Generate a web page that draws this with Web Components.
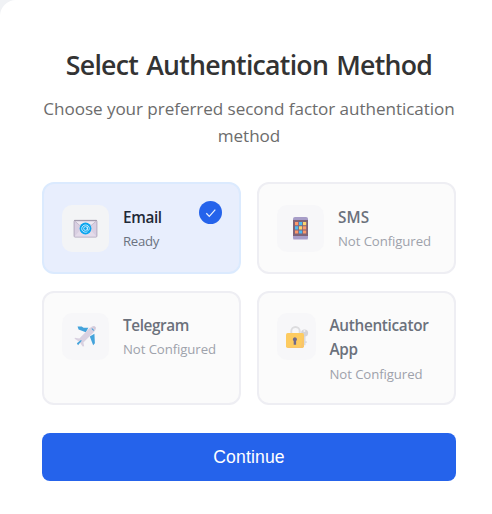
<!DOCTYPE html>
<html lang="en"><head><meta charset="utf-8"><title>Select Authentication Method</title>
<style>
html,body{margin:0;height:100%;overflow:hidden}
body{background:#f0f2f5;font-family:"Open Sans","Noto Sans",sans-serif}
</style></head><body>
<auth-panel>
  <span slot="title">Select Authentication Method</span>
  <span slot="subtitle">Choose your preferred second factor authentication method</span>
  <method-option selected style="--track:-.36px;--sub:-.3px"><glyph-icon slot="icon" name="email"></glyph-icon>Email<span slot="status">Ready</span></method-option>
  <method-option disabled style="--track:.1px;--top:21px"><glyph-icon slot="icon" name="phone"></glyph-icon>SMS<span slot="status">Not Configured</span></method-option>
  <method-option disabled style="--track:-.4px;--lead:25px"><glyph-icon slot="icon" name="plane"></glyph-icon>Telegram<span slot="status">Not Configured</span></method-option>
  <method-option disabled style="--track:-.3px;--icon:38.5px"><glyph-icon slot="icon" name="lock"></glyph-icon>Authenticator App<span slot="status">Not Configured</span></method-option>
  <primary-button slot="action">Continue</primary-button>
</auth-panel>
<script>
const define=(name,html,init)=>customElements.define(name,class extends HTMLElement{
  constructor(){super();this.attachShadow({mode:'open'}).innerHTML=html}
  connectedCallback(){if(init)init(this)}
});
const icons={
email:`<svg width="25" height="19" viewBox="0 0 26 20"><rect x="1" y="1.5" width="24" height="17.5" rx="1" fill="#d9cfe2" stroke="#b0a6bd"/><path d="M1.5 18.5 9 10h8l7.5 8.5z" fill="#e4dbea"/><path d="M1.5 2h23L13 12z" fill="#eee9f2" stroke="#b9aec4" stroke-width=".8"/><path d="M1 1.5h24" stroke="#9f98a9"/><circle cx="13" cy="10" r="6.2" fill="#0aa5ee"/><path d="M15 8v3.2c0 1.5 2 .8 2-1.1 0-2.4-1.8-3.8-4-3.8s-4 1.6-4 3.8 1.8 3.8 4 3.8c.8 0 1.5-.1 2.1-.5M15 10a2 2 0 1 1-4 0 2 2 0 0 1 4 0" fill="none" stroke="#d8f2ff" stroke-width=".9"/></svg>`,
phone:`<svg width="16" height="24" viewBox="0 0 16 24"><rect width="15" height="23" rx="2" fill="#8d80b8"/><path d="M1 22.5h13" stroke="#c5bcdb"/><path d="M0 3h15v16H0z" fill="#58334e"/><path d="M2 5h3.2v3.2H2zM2 13.4h3.2v3.2H2zM10 9.2h3.2v3.2H10zM10 13.4h3.2v3.2H10z" fill="#ff7c3c"/><path d="M6 5h3.2v3.2H6zM2 9.2h3.2v3.2H2zM6 13.4h3.2v3.2H6z" fill="#12a8f0"/><path d="M10 5h3.2v3.2H10zM6 9.2h3.2v3.2H6z" fill="#ffc93e"/></svg>`,
plane:`<svg width="23" height="23" viewBox="0 0 24 24"><g fill="#0887d2"><path d="M3.7 1.5 8 1.6l2 1.2h5L12.3 7.6l-7.5-3zM16.5 12l4.8-3 .5 10-1.8 2z"/></g><path d="M1 13.2 5.6 14l10.7-10.8C18.2 1.5 21 .5 22.2 1.8s.2 3.8-1.6 5.8L9.8 18.2l.8 4-1.5.3-3.5-5-5-3.2z" fill="#d0c5d9"/><path d="M19 1.6 22.2 5 22.6 2.4 21.2 1.3z" fill="#c6bacf"/><path d="m18.7 3.2 2.5 2.3-1.1.5-1.7-1.7zM3 19.1l4.3-3.4.8.8L4.2 21z" fill="#0887d2"/></svg>`,
lock:`<svg style="margin-left:2px" width="23" height="24" viewBox="0 0 23 24"><path d="M5.3 10V6.2a4.2 4.2 0 0 1 8.4 0V10" fill="none" stroke="#d4d4d6" stroke-width="1.9"/><path d="M17.8 10v10.2h1.7v-2.3h1.2v-1.7h-1.2V10z" fill="#d2d1d4"/><circle cx="18.6" cy="8" r="3.5" fill="#c9c8cc"/><circle cx="18.4" cy="6.1" r="1" fill="#f0eff2"/><rect y="8" width="18" height="15" rx="1.7" fill="#ffbd2e"/><path d="M17.3 10v11.8L16.2 23H2v-.7h13z" fill="#f8b140"/><path d="M8.9 12.3a2.1 2.1 0 0 1 1.2 3.8v3.7H7.7v-3.7a2.1 2.1 0 0 1 1.2-3.8" fill="#433b68"/></svg>`};
define('glyph-icon','<style>:host{display:block;line-height:0}svg{display:block}</style><div></div>',e=>e.shadowRoot.querySelector('div').innerHTML=icons[e.getAttribute('name')]);
define('method-option',`<style>
:host{display:flex;position:relative;box-sizing:border-box;align-items:flex-start;border:2px solid #eeeef3;border-radius:12px;background:#fbfbfb;padding:var(--top,20px) 12px 18px 18px;gap:14px}
:host([selected]){background:#e8eefd;border-color:#dbeafe;padding-top:21px}
.icon{flex:0 0 var(--icon,47px);height:47px;display:grid;place-items:center;border-radius:10px;background:#f3f4f6}
:host([disabled]) .icon{background:#f7f7f9}
:host([disabled]) ::slotted(glyph-icon){opacity:.75}
.copy{flex:1 1 0;min-width:0}
.name{font-size:15.3px;font-weight:600;line-height:24.3px;letter-spacing:var(--track);color:#1f2937}
.status{font-size:13.2px;font-weight:400;line-height:var(--lead,24px);letter-spacing:var(--sub,-.09px);color:#6b7280;white-space:nowrap}
:host([disabled]) .name{color:#6b717c}
:host([disabled]) .status{color:#9ea2ab}
.badge{display:none;position:absolute;right:17px;top:17px;width:23px;height:23px;border-radius:50%;background:#2563eb}
:host([selected]) .badge{display:block}
</style><div class="icon"><slot name="icon"></slot></div><div class="copy"><div class="name"><slot></slot></div><div class="status"><slot name="status"></slot></div></div><div class="badge"><svg width="23" height="23" viewBox="0 0 23 23"><path d="m7.3 12.3 3 3.1 6-6.8" fill="none" stroke="#e9effe" stroke-width="1.25"/></svg></div>`);
define('primary-button',`<style>:host{display:block}button{display:block;width:100%;height:48px;border:0;border-radius:8px;background:#2563eb;color:#fff;font:500 17.6px "Liberation Sans",sans-serif;letter-spacing:.15px;padding:0}</style><button><slot></slot></button>`);
define('auth-panel',`<style>
:host{display:block;box-sizing:border-box;min-height:514px;background:#fff;border-radius:16px 0 0 0;padding:46px 36px 33px 42px}
h1{margin:0;text-align:center;font-size:26.7px;line-height:38px;font-weight:600;letter-spacing:-.75px;word-spacing:2px;color:#333;white-space:nowrap}
p{margin:11px -2px 33px;text-align:center;font-size:17.1px;line-height:27px;font-weight:400;letter-spacing:-.06px;color:#6c6c6c}
.grid{display:grid;grid-template-columns:1fr 1fr;grid-template-rows:92px 114px;gap:17px 16px;margin-bottom:28px}
</style><h1><slot name="title"></slot></h1><p><slot name="subtitle"></slot></p><div class="grid"><slot></slot></div><slot name="action"></slot>`);
</script></body></html>
